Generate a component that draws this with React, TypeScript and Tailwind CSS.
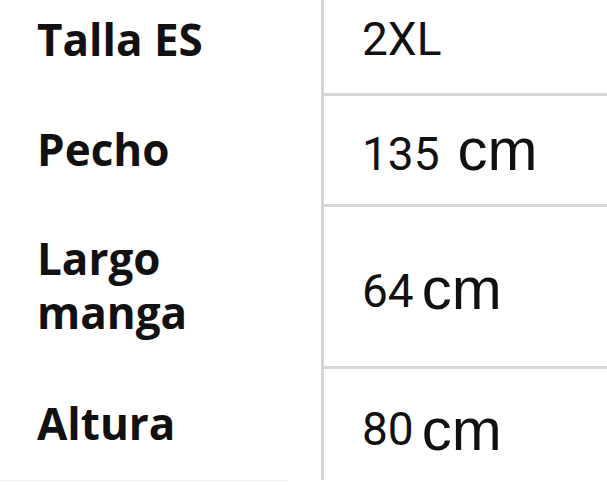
const label = "font-['Open_Sans',sans-serif] font-bold text-[44px] leading-[54px] text-[#111111]";
const value = "font-['Roboto',sans-serif] text-[46px] leading-none text-[#111111]";
const unit = "font-['Liberation_Sans',Arial,sans-serif] text-[60px] leading-none text-[#111111]";

type Row = {
  label: string[];
  value: string;
  unit?: string;
  gap?: string;
  drop?: string;
  height: string;
  shift?: string;
};

const rows: Row[] = [
  { label: ['Talla ES'], value: '2XL', height: 'h-[93px]', shift: 'pb-4' },
  { label: ['Pecho'], value: '135', unit: 'cm', gap: 'ml-[18px]', height: 'h-[111px]' },
  { label: ['Largo', 'manga'], value: '64', unit: 'cm', gap: 'ml-[8px]', drop: 'translate-y-[2px]', height: 'h-[162px]' },
  { label: ['Altura'], value: '80', unit: 'cm', gap: 'ml-[8px]', drop: 'translate-y-[5px]', height: 'h-[114px]' },
];

export default function App() {
  return (
    <div className="w-[607px] h-[500px] bg-white overflow-hidden">
      {rows.map((row, i) => (
        <div key={row.value} className={`flex ${row.height}`}>
          <div className={`w-[321px] flex items-center pl-[37px] ${row.shift ?? ''}`}>
            <div className={label}>
              {row.label.map((l) => (
                <div key={l}>{l}</div>
              ))}
            </div>
          </div>
          <div
            className={`flex-1 flex items-center pl-[38px] border-l-[3px] border-[#d6d6d6] ${
              i > 0 ? 'border-t-[3px]' : ''
            } ${row.shift ?? ''}`}
          >
            <div className="flex items-baseline">
              <span className={value}>{row.value}</span>
              {row.unit && (
                <span className={`${unit} ${row.gap} ${row.drop ?? ''}`}>{row.unit}</span>
              )}
            </div>
          </div>
        </div>
      ))}
      <div className="h-px w-[288px] bg-[#f0f0f0]" />
    </div>
  );
}
